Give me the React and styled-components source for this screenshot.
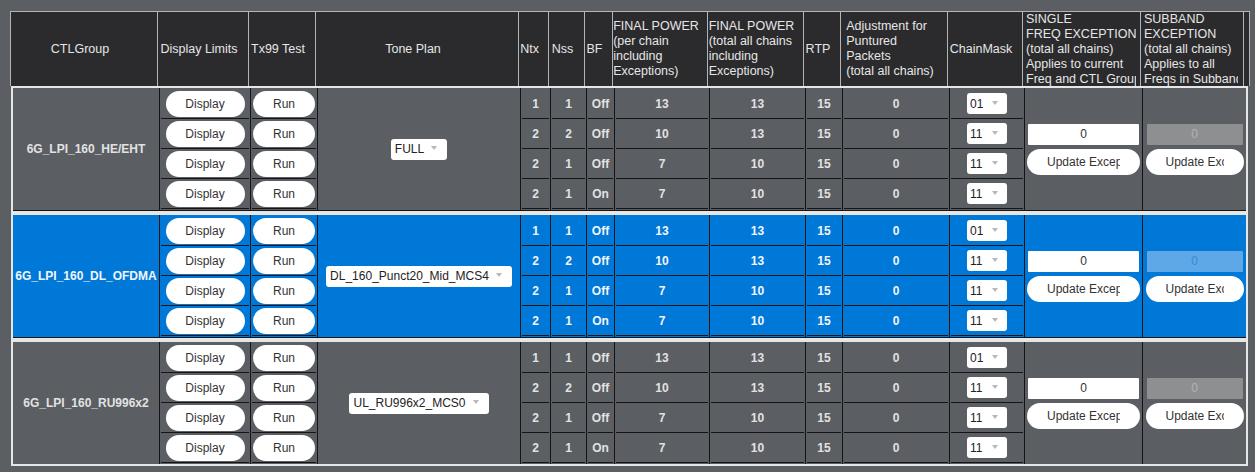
import styled, { createGlobalStyle } from "styled-components"

const GlobalStyle = createGlobalStyle`
  html, body {
    margin: 0;
    padding: 0;
    background: #5b5e62;
  }
  body {
    font-family: "Liberation Sans", Arial, sans-serif;
    font-size: 12px;
  }
  * { box-sizing: border-box; }
`

// widths of the 14 table columns, right border included
const COLS = [147, 91, 67, 203, 30, 36, 28, 95, 96, 37, 107, 75, 118, 103]

const rows = [
  { ntx: 1, nss: 1, bf: "Off", fp: 13, fpt: 13, rtp: 15, adj: 0, mask: "01" },
  { ntx: 2, nss: 2, bf: "Off", fp: 10, fpt: 13, rtp: 15, adj: 0, mask: "11" },
  { ntx: 2, nss: 1, bf: "Off", fp: 7, fpt: 10, rtp: 15, adj: 0, mask: "11" },
  { ntx: 2, nss: 1, bf: "On", fp: 7, fpt: 10, rtp: 15, adj: 0, mask: "11" },
]

const groups = [
  { name: "6G_LPI_160_HE/EHT", tone: "FULL", blue: false },
  { name: "6G_LPI_160_DL_OFDMA", tone: "DL_160_Punct20_Mid_MCS4", blue: true },
  { name: "6G_LPI_160_RU996x2", tone: "UL_RU996x2_MCS0", blue: false },
]

const headers = [
  { text: ["CTLGroup"] },
  { text: ["Display Limits"] },
  { text: ["Tx99 Test"] },
  { text: ["Tone Plan"] },
  { text: ["Ntx"] },
  { text: ["Nss"] },
  { text: ["BF"] },
  { text: ["FINAL POWER", "(per chain", "including", "Exceptions)"] },
  { text: ["FINAL POWER", "(total all chains", "including", "Exceptions)"] },
  { text: ["RTP"] },
  { text: ["Adjustment for", "Puntured", "Packets", "(total all chains)"] },
  { text: ["ChainMask"] },
  { text: ["SINGLE", "FREQ EXCEPTION", "(total all chains)", "Applies to current", "Freq and CTL Group"], clip: 110 },
  { text: ["SUBBAND", "EXCEPTION", "(total all chains)", "Applies to all", "Freqs in Subband"], clip: 94 },
]

const Page = styled.div`
  padding: 11px 0 0 10px;
  height: 472px;
  overflow: hidden;
`

const HeaderRow = styled.div`
  display: flex;
  width: 1240px;
  height: 75px;
  background: #2b2b2d;
  border: 1px solid #b4b4b4;
  border-bottom: none;
`

const Th = styled.div`
  flex: 0 0 ${(p) => p.$w}px;
  display: flex;
  align-items: center;
  justify-content: ${(p) => (p.$clip ? "flex-start" : "center")};
  padding: ${(p) => (p.$clip ? "0 0 0 3px" : "0 8px 0 0")};
  border-right: ${(p) => (p.$filler ? "none" : "1px solid #b4b4b4")};
  color: #e6e6e6;
  font-size: 12.5px;
  line-height: 15px;
  white-space: nowrap;
  overflow: hidden;
`

const ThText = styled.div`
  text-align: left;
  ${(p) => p.$clipW && `width: ${p.$clipW}px; flex: 0 0 ${p.$clipW}px; overflow: hidden;`}
`

const Body = styled.div`
  width: 1237px;
  margin-left: 1px;
  border: 2px solid #e6e6e6;
  background: #e6e6e6;
  display: flex;
  flex-direction: column;
  gap: 4px;
`

const Group = styled.div`
  display: flex;
  background: ${(p) => (p.$blue ? "#0078d7" : "#5b5e62")};
  color: ${(p) => (p.$blue ? "#f2f6fb" : "#e2e2e2")};
  &:not(:last-child) {
    border-bottom: 1px solid #141414;
  }
`

const Col = styled.div`
  flex: 0 0 ${(p) => p.$w}px;
  height: 122px;
  border-right: 1px solid #141414;
  &:last-child {
    border-right: none;
  }
`

const StackCol = styled(Col)`
  display: flex;
  flex-direction: column;
  padding: 1px 0;
`

const SpanCol = styled(Col)`
  display: flex;
  flex-direction: column;
  align-items: center;
  justify-content: center;
  gap: 4px;
`

const StackCell = styled.div`
  height: 30px;
  margin: 0 1px;
  border-bottom: 1px solid #141414;
  display: flex;
  align-items: center;
  justify-content: center;
  font-weight: bold;
`

const GroupName = styled.div`
  font-weight: bold;
  white-space: nowrap;
`

const PillButton = styled.button`
  width: ${(p) => p.$w}px;
  height: 26px;
  padding: 0;
  border: none;
  border-radius: 13px;
  background: #fff;
  color: #333;
  font: 12px "Liberation Sans", Arial, sans-serif;
  display: flex;
  align-items: center;
  justify-content: center;
`

const Clip = styled.span`
  display: block;
  width: ${(p) => p.$w}px;
  overflow: hidden;
  white-space: nowrap;
  text-align: left;
`

const Select = styled.div`
  display: inline-flex;
  align-items: center;
  justify-content: space-between;
  gap: 7px;
  height: 21px;
  width: ${(p) => (p.$w ? `${p.$w}px` : "auto")};
  padding: ${(p) => (p.$w ? "0 9px 0 3px" : "0 10px 0 4px")};
  background: #fff;
  border-radius: 3px;
  color: #222;
  font-size: 12px;
  font-weight: normal;
  white-space: nowrap;
`

const Caret = styled.span`
  width: 0;
  height: 0;
  margin-bottom: 2px;
  border-left: 3px solid transparent;
  border-right: 3px solid transparent;
  border-top: 4px solid #b8b8b8;
`

const NumInput = styled.input`
  width: ${(p) => p.$w}px;
  height: 21px;
  padding: 0;
  border: none;
  border-radius: 1px;
  background: #fff;
  color: #333;
  text-align: center;
  font: 12px "Liberation Sans", Arial, sans-serif;
  outline: none;
  &:disabled {
    background: ${(p) => (p.$blue ? "#5ea8e8" : "#8e8f91")};
    color: ${(p) => (p.$blue ? "#3a88d2" : "#b3b3b3")};
  }
`

const Stack = ({ w, render }) => (
  <StackCol $w={w}>
    {rows.map((r, i) => (
      <StackCell key={i}>{render(r)}</StackCell>
    ))}
  </StackCol>
)

const GroupRow = ({ g }) => (
  <Group $blue={g.blue}>
    <SpanCol $w={COLS[0]}>
      <GroupName>{g.name}</GroupName>
    </SpanCol>
    <Stack w={COLS[1]} render={() => <PillButton $w={79}>Display</PillButton>} />
    <Stack w={COLS[2]} render={() => <PillButton $w={62}>Run</PillButton>} />
    <SpanCol $w={COLS[3]}>
      <Select>
        {g.tone}
        <Caret />
      </Select>
    </SpanCol>
    <Stack w={COLS[4]} render={(r) => r.ntx} />
    <Stack w={COLS[5]} render={(r) => r.nss} />
    <Stack w={COLS[6]} render={(r) => r.bf} />
    <Stack w={COLS[7]} render={(r) => r.fp} />
    <Stack w={COLS[8]} render={(r) => r.fpt} />
    <Stack w={COLS[9]} render={(r) => r.rtp} />
    <Stack w={COLS[10]} render={(r) => r.adj} />
    <Stack
      w={COLS[11]}
      render={(r) => (
        <Select $w={40}>
          {r.mask}
          <Caret />
        </Select>
      )}
    />
    <SpanCol $w={COLS[12]}>
      <NumInput $w={111} defaultValue="0" />
      <PillButton $w={113}>
        <Clip $w={73}>Update Exception</Clip>
      </PillButton>
    </SpanCol>
    <SpanCol $w={COLS[13]}>
      <NumInput $w={96} $blue={g.blue} defaultValue="0" disabled />
      <PillButton $w={98}>
        <Clip $w={58}>Update Exception</Clip>
      </PillButton>
    </SpanCol>
  </Group>
)

const App = () => {
  return (
    <Page>
      <GlobalStyle />
      <HeaderRow>
        {headers.map((h, i) => (
          <Th key={i} $w={COLS[i]} $clip={h.clip}>
            <ThText $clipW={h.clip}>
              {h.text.map((line, j) => (
                <div key={j}>{line}</div>
              ))}
            </ThText>
          </Th>
        ))}
        <Th $w={5} $filler />
      </HeaderRow>
      <Body>
        {groups.map((g) => (
          <GroupRow key={g.name} g={g} />
        ))}
      </Body>
    </Page>
  )
}

export default App
